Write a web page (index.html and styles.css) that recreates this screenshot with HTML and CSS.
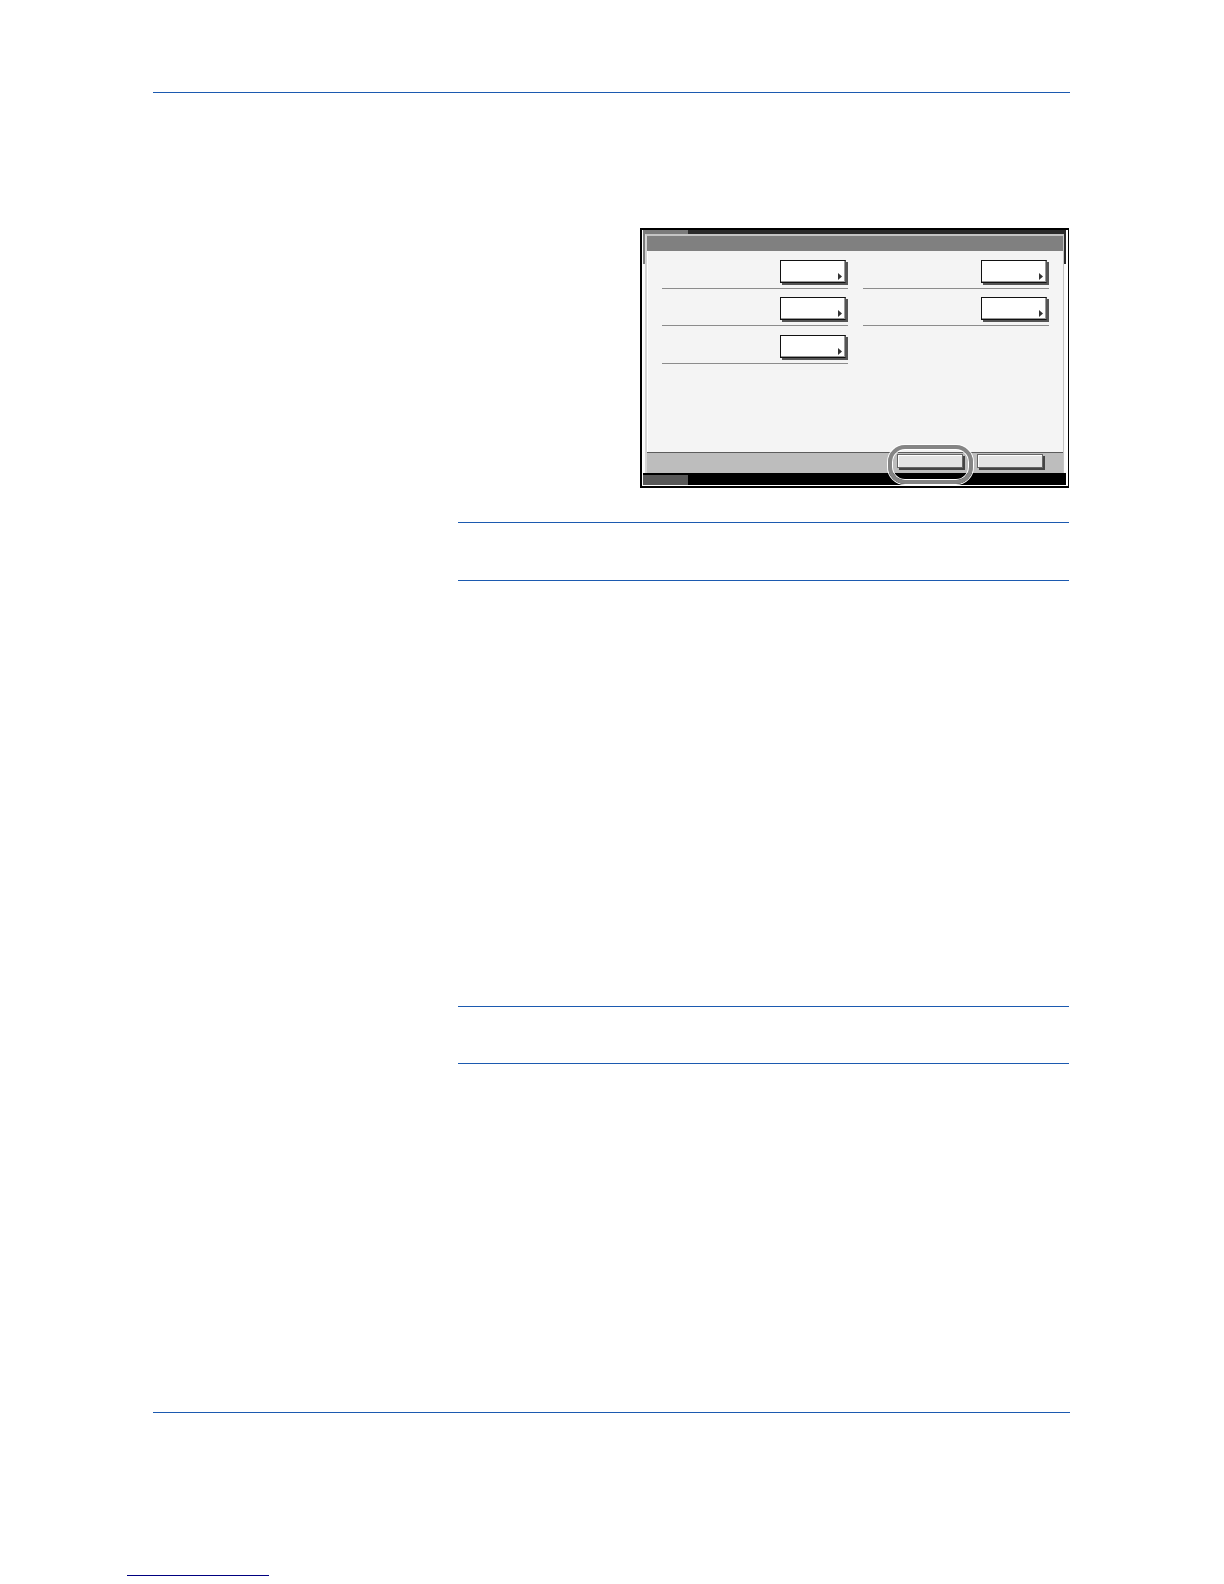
FILE: index.html
```
<!DOCTYPE html>
<html lang="en">
<head>
    <meta charset="UTF-8">
    <meta name="viewport" content="width=device-width, initial-scale=1.0">
    <title>Settings</title>
    <link rel="stylesheet" href="styles.css">
</head>
<body>
    <div class="page">
        <main class="content">
            <div class="panel">
                <div class="screen">
                    <div class="window">
                        <div class="titlebar"></div>
                        <div class="settings">
                            <div class="column">
                                <div class="row">
                                    <button class="change" aria-label="Change"><svg width="4" height="7" viewBox="0 0 4 7"><path d="M0 0L4 3.5L0 7Z"/></svg></button>
                                </div>
                                <div class="row">
                                    <button class="change" aria-label="Change"><svg width="4" height="7" viewBox="0 0 4 7"><path d="M0 0L4 3.5L0 7Z"/></svg></button>
                                </div>
                                <div class="row">
                                    <button class="change" aria-label="Change"><svg width="4" height="7" viewBox="0 0 4 7"><path d="M0 0L4 3.5L0 7Z"/></svg></button>
                                </div>
                            </div>
                            <div class="column">
                                <div class="row">
                                    <button class="change" aria-label="Change"><svg width="4" height="7" viewBox="0 0 4 7"><path d="M0 0L4 3.5L0 7Z"/></svg></button>
                                </div>
                                <div class="row">
                                    <button class="change" aria-label="Change"><svg width="4" height="7" viewBox="0 0 4 7"><path d="M0 0L4 3.5L0 7Z"/></svg></button>
                                </div>
                            </div>
                        </div>
                        <div class="actions">
                            <div class="highlighted">
                                <button class="action" aria-label="Back"></button>
                                <span class="ring"></span>
                            </div>
                            <button class="action" aria-label="Close"></button>
                        </div>
                    </div>
                </div>
            </div>
            <div class="note"></div>
            <div class="note note-second"></div>
        </main>
    </div>
    <a class="footer-link" href="#" aria-label="Home"></a>
</body>
</html>
```
FILE: styles.css
```
* {
    box-sizing: border-box;
}
body {
    margin: 0;
    background-color: #fff;
    font-family: "Liberation Sans", Arial, sans-serif;
}
.page {
    margin: 92px 154px 0 153px;
    padding-top: 135px;
    padding-bottom: 348px;
    border-top: 1px solid #1c5ab0;
    border-bottom: 1px solid #1c5ab0;
}
.content {
    margin: 0 1px 0 305px;
}

/* touch panel */
.panel {
    max-width: 429px;
    margin-left: auto;
    padding: 0 2px 1px 1px;
    background-color: #fff;
    border: 2px solid #000;
    border-right-width: 1px;
}
.screen {
    padding: 4px 2px 12px;
    background:
        linear-gradient(#7b7b7b, #7b7b7b) left top / 45px 34px no-repeat,
        linear-gradient(#2b2b2b, #2b2b2b) left top / 100% 34px no-repeat,
        linear-gradient(#585858, #585858) left bottom / 45px 10px no-repeat,
        linear-gradient(#000, #000) left bottom / 100% 12px no-repeat,
        #fafafa;
}
.window {
    background-color: #f4f4f4;
    border: 2px solid #c4c4c4;
    border-left-color: #d4d4d4;
    border-right-width: 1px;
    border-bottom: none;
}
.titlebar {
    height: 15px;
    background-color: #808080;
}
.settings {
    display: grid;
    grid-template-columns: 1fr 1fr;
    column-gap: 15px;
    min-height: 201px;
    padding: 1px 14px 0 15px;
    box-shadow: inset 1px 0 #fff;
}
.column {
    display: grid;
    grid-template-rows: 37px 37px 38px;
}
.row {
    display: flex;
    justify-content: flex-end;
    align-items: flex-end;
    padding: 0 2px 5px 0;
    border-bottom: 1px solid #8c8c8c;
}
.change {
    display: flex;
    justify-content: flex-end;
    align-items: flex-end;
    width: 66px;
    height: 23px;
    padding: 0 3px 2px 0;
    background-color: #fff;
    border: 1px solid #111;
    border-right-color: #555;
    border-radius: 0;
    box-shadow: inset -1px -1px #999, 2px 2px #555;
    cursor: pointer;
}
.change svg {
    fill: #333;
}
.actions {
    display: flex;
    justify-content: flex-end;
    gap: 14px;
    height: 21px;
    padding: 1px 20px 0 0;
    background-color: #bdbdbd;
    border-top: 1px solid #5c5c5c;
}
.highlighted {
    position: relative;
    height: 14px;
}
.action {
    display: block;
    width: 66px;
    height: 14px;
    padding: 0;
    background-color: #e4e4e4;
    border: 1px solid #666;
    border-radius: 0;
    box-shadow: inset 1px 1px #fff, 2px 2px #444;
    cursor: pointer;
}
.ring {
    position: absolute;
    top: -9px;
    left: -9px;
    width: 85px;
    height: 39px;
    border: 4px solid #858585;
    border-radius: 17px;
    box-shadow: 0 0 0 1px #fff, inset 0 0 0 1px #fff;
    pointer-events: none;
}

/* note boxes */
.note {
    height: 59px;
    margin-top: 34px;
    border-top: 1px solid #1c5ab0;
    border-bottom: 1px solid #1c5ab0;
}
.note-second {
    height: 58px;
    margin-top: 425px;
}

.footer-link {
    display: block;
    width: 142px;
    height: 163px;
    margin: 0 0 8px 127px;
    border-bottom: 1px solid #000080;
}
```
